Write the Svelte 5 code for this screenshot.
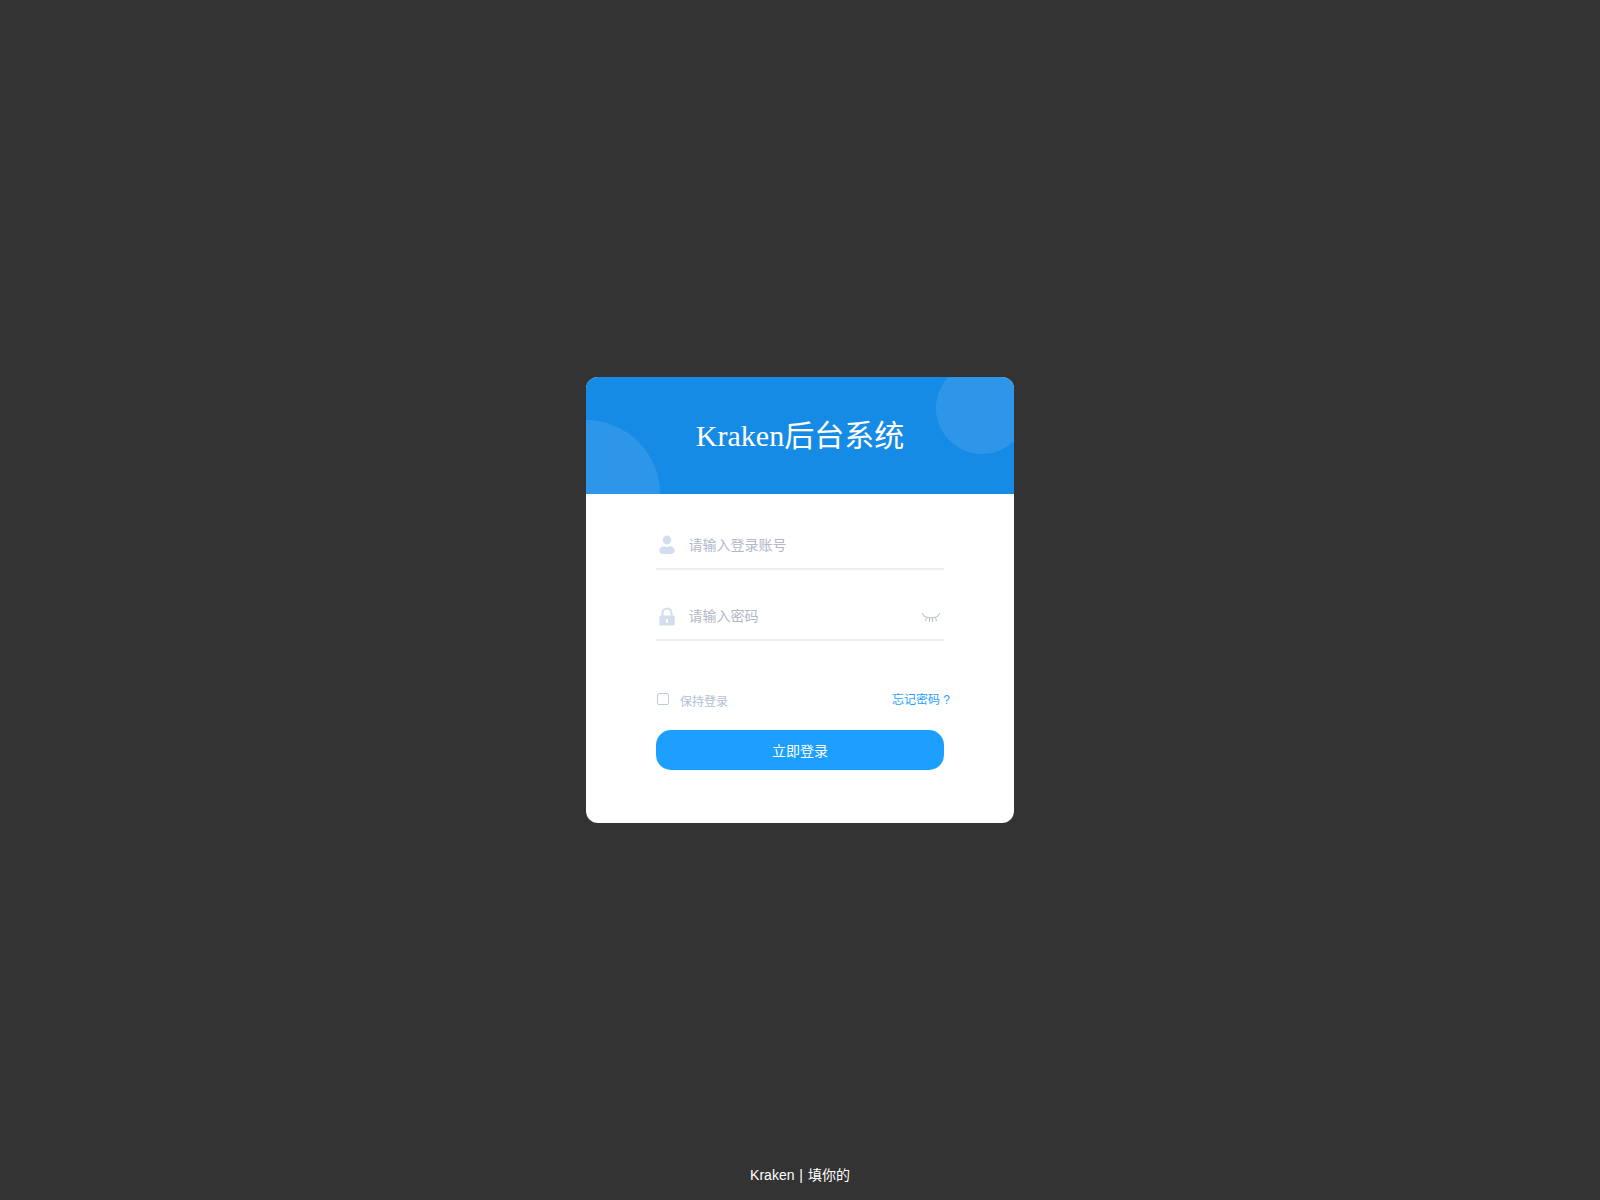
<script>
  let account = $state('');
  let password = $state('');
  let keep = $state(false);
</script>

<div class="page">
  <main class="card">
    <header class="banner">
      <h1>Kraken后台系统</h1>
    </header>
    <form class="form" onsubmit={(e) => e.preventDefault()}>
      <label class="field">
        <svg class="icon" viewBox="0 0 16 20" width="16" height="20">
          <circle cx="8" cy="5" r="4.4" />
          <path d="M5 11.200c2 1 4 1 6 0 2.500 0 4.700 2 4.700 4.300 0 2.300-1.500 3.500-3.700 3.500H4c-2.200 0-3.700-1.200-3.700-3.500 0-2.300 2.200-4.300 4.700-4.300z" />
        </svg>
        <input bind:value={account} placeholder="请输入登录账号" />
      </label>
      <label class="field second">
        <svg class="icon" viewBox="0 0 16 20" width="16" height="20">
          <path class="shackle" d="M3.500 10V7a4.500 4.500 0 0 1 9 0v3" />
          <path fill-rule="evenodd" d="M1.500 9.500h13a1.200 1.200 0 0 1 1.200 1.200v7.600a1.200 1.200 0 0 1-1.200 1.200h-13A1.200 1.200 0 0 1 .3 18.300v-7.600a1.200 1.200 0 0 1 1.200-1.200zM7 13v4h2v-4z" />
        </svg>
        <input type="password" bind:value={password} placeholder="请输入密码" />
        <svg class="eye" viewBox="0 0 20 12" width="20" height="12">
          <path d="M2 3.500c4 3 12 3 16 0M1 1l2 2.700M5.500 5.500l-1 3.500M8.500 6v3.800M11.500 6v3.800M14.500 5.500l1 3.500M19 1l-2 2.700" />
        </svg>
      </label>
      <div class="options">
        <label class="keep">
          <input type="checkbox" bind:checked={keep} />
          <span>保持登录</span>
        </label>
        <a href="#forgot" class="forgot">忘记密码 ?</a>
      </div>
      <button type="submit">立即登录</button>
    </form>
  </main>
  <footer>Kraken | 填你的</footer>
</div>

<style>
  :global(body) {
    background: #333;
  }

  .page {
    height: 1200px;
    display: grid;
    grid-template-rows: 1fr auto 1fr;
    justify-items: center;
    font-family: Arial, "Liberation Sans", "Noto Sans CJK SC", sans-serif;
  }

  .card {
    grid-row: 2;
    width: 428px;
    height: 446px;
    background: #fff;
    border-radius: 12px;
    overflow: hidden;
  }

  .banner {
    position: relative;
    box-sizing: border-box;
    height: 117px;
    padding-bottom: 5px;
    background: #168be6;
    display: flex;
    align-items: center;
    justify-content: center;
    overflow: hidden;
  }

  .banner::before,
  .banner::after {
    content: '';
    position: absolute;
    border-radius: 50%;
    background: rgba(255, 255, 255, 0.1);
  }

  .banner::before {
    width: 148px;
    height: 148px;
    left: -74px;
    top: 43px;
  }

  .banner::after {
    width: 92px;
    height: 92px;
    right: -14px;
    top: -15px;
  }

  h1 {
    margin: 0;
    font: 400 30px "Liberation Serif", "Noto Sans CJK SC", serif;
    color: #fff;
  }

  .form {
    display: flex;
    flex-direction: column;
    padding: 28px 70px 0;
  }

  .field {
    height: 46px;
    display: flex;
    align-items: center;
    border-bottom: 2px solid #ebeff3;
  }

  .second {
    margin-top: 23px;
  }

  .icon {
    flex: none;
    margin-left: 2.5px;
    fill: #d3deec;
  }

  .shackle {
    fill: none;
    stroke: #d3deec;
    stroke-width: 2;
  }

  .field input {
    flex: 1;
    min-width: 0;
    margin-left: 14px;
    border: 0;
    outline: 0;
    padding: 0;
    font: 14px "Liberation Sans", "Noto Sans CJK SC", sans-serif;
    color: #606266;
  }

  .field input::placeholder {
    color: #b1b8c7;
  }

  .eye {
    flex: none;
    margin: 3px 3px 0 0;
    fill: none;
    stroke: #b3bbd0;
    stroke-width: 1;
  }

  .options {
    display: flex;
    justify-content: space-between;
    align-items: center;
    margin-top: 50px;
    margin-right: -6px;
    font-size: 12px;
  }

  .keep {
    display: flex;
    align-items: center;
    color: #b4c0d2;
  }

  .keep input {
    appearance: none;
    width: 12px;
    height: 12px;
    margin: -2px 11px 0 1px;
    border: 1px solid #b5cde6;
    border-radius: 2px;
  }

  .keep span {
    padding-top: 1px;
  }

  .forgot {
    color: #1d9fff;
    text-decoration: none;
    margin-top: -3px;
  }

  button {
    height: 40px;
    margin-top: 21px;
    border: 0;
    border-radius: 15px;
    background: #1d9fff;
    color: #fff;
    font: 14px "Liberation Sans", "Noto Sans CJK SC", sans-serif;
  }

  footer {
    grid-row: 3;
    align-self: end;
    padding-bottom: 16px;
    font-size: 14px;
    line-height: 18px;
    word-spacing: 1px;
    color: #fff;
  }
</style>
